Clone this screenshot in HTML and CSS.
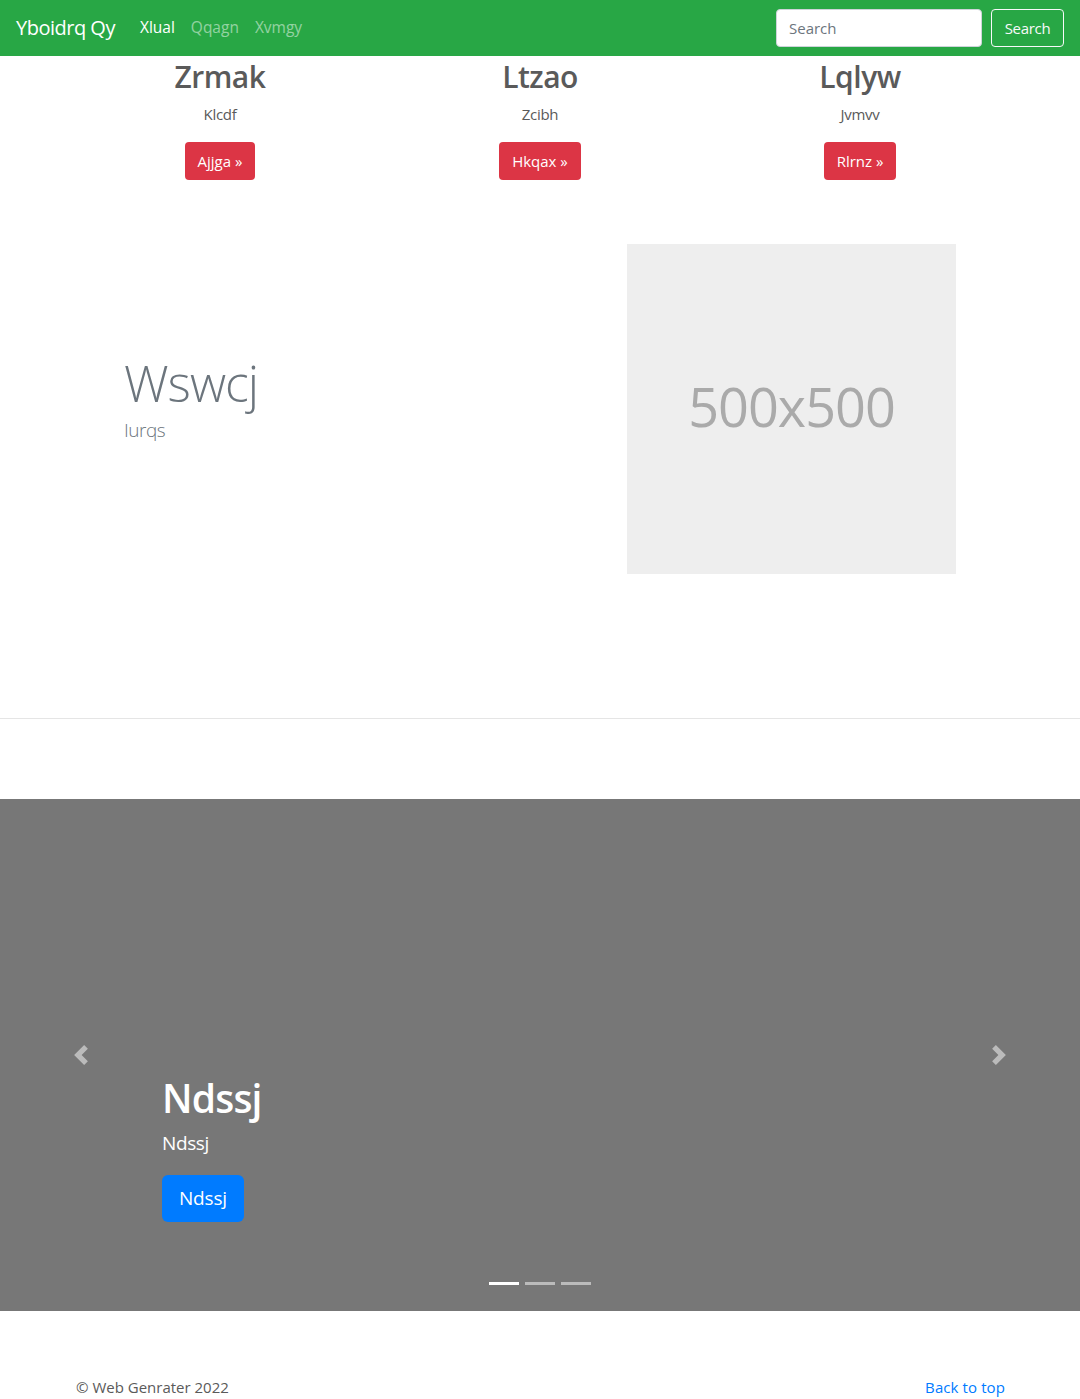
FILE: index.html
```html
<!DOCTYPE html>
<html lang="en">
<head>
<meta charset="utf-8">
<title>Yboidrq Qy</title>
<link rel="stylesheet" href="styles.css">
</head>
<body>
<header class="navbar">
  <a class="brand" href="#">Yboidrq Qy</a>
  <nav class="nav">
    <a class="nav-link active" href="#">Xlual</a>
    <a class="nav-link" href="#">Qqagn</a>
    <a class="nav-link" href="#">Xvmgy</a>
  </nav>
  <form class="search">
    <input class="search-input" type="text" placeholder="Search">
    <button class="search-btn" type="button">Search</button>
  </form>
</header>

<main>
  <section class="container marketing">
    <div class="col">
      <h2 class="col-title">Zrmak</h2>
      <p class="col-text">Klcdf</p>
      <a class="btn-danger" href="#">Ajjga &raquo;</a>
    </div>
    <div class="col">
      <h2 class="col-title">Ltzao</h2>
      <p class="col-text">Zcibh</p>
      <a class="btn-danger" href="#">Hkqax &raquo;</a>
    </div>
    <div class="col">
      <h2 class="col-title">Lqlyw</h2>
      <p class="col-text">Jvmvv</p>
      <a class="btn-danger" href="#">Rlrnz &raquo;</a>
    </div>
  </section>

  <section class="container featurette">
    <div class="feat-text">
      <h1 class="feat-heading">Wswcj</h1>
      <p class="feat-lead">Iurqs</p>
    </div>
    <div class="placeholder">500x500</div>
  </section>

  <hr class="divider">

  <section class="carousel">
    <ol class="indicators">
      <li class="ind active"></li>
      <li class="ind"></li>
      <li class="ind"></li>
    </ol>
    <a class="control prev" href="#">
      <svg width="20" height="20" viewBox="0 0 8 8"><path fill="#fff" d="M5.25 0l-4 4 4 4 1.5-1.5L4.25 4l2.5-2.5L5.25 0z"/></svg>
    </a>
    <a class="control next" href="#">
      <svg width="20" height="20" viewBox="0 0 8 8"><path fill="#fff" d="M2.75 0l-1.5 1.5L3.75 4l-2.5 2.5L2.75 8l4-4-4-4z"/></svg>
    </a>
    <div class="caption">
      <h1 class="cap-title">Ndssj</h1>
      <p class="cap-text">Ndssj</p>
      <p class="cap-action"><a class="btn-primary" href="#">Ndssj</a></p>
    </div>
  </section>
</main>

<footer class="container footer">
  <p class="copy">&copy; Web Genrater 2022</p>
  <a class="top-link" href="#">Back to top</a>
</footer>
</body>
</html>
```

FILE: styles.css
```css
* { box-sizing: border-box; }

html, body { margin: 0; padding: 0; }

body {
  font-family: "Open Sans", "Noto Sans", sans-serif;
  font-size: 16px;
  line-height: 1.5;
  color: #5a5a5a;
  background: #fff;
}

a { text-decoration: none; }

/* navbar */
.navbar {
  height: 56px;
  background: #28a745;
  display: flex;
  align-items: center;
  padding: 8px 16px;
}
.brand {
  font-size: 20px;
  line-height: 30px;
  color: #fff;
  margin-right: 16px;
  letter-spacing: -0.5px;
}
.nav { display: flex; flex: 1; padding-left: 1px; }
.nav-link {
  padding: 8px;
  color: rgba(255,255,255,.5);
  font-size: 15.5px;
  letter-spacing: 0;
}
.nav-link.active { color: #fff; }
.search { display: flex; align-items: center; }
.search-input {
  width: 206px;
  height: 38px;
  padding: 6px 12px;
  font: inherit;
  font-size: 15px;
  border: 1px solid #ced4da;
  border-radius: 4px;
  margin-right: 9px;
  color: #495057;
}
.search-input::placeholder { color: #6c757d; }
.search-btn {
  height: 38px;
  width: 73px;
  font: inherit;
  font-size: 15px;
  letter-spacing: -0.3px;
  color: #f8f9fa;
  background: transparent;
  border: 1px solid #f8f9fa;
  border-radius: 4px;
  padding: 0;
}

/* marketing */
.container {
  width: 960px;
  margin: 0 auto;
}
.marketing {
  display: grid;
  grid-template-columns: repeat(3, 1fr);
  text-align: center;
}
.col-title {
  font-size: 30px;
  font-weight: 600;
  line-height: 38px;
  margin: 2px 0 6px;
  letter-spacing: -0.5px;
}
.col-text {
  margin: 0 0 16px;
  font-size: 15px;
  line-height: 24px;
  letter-spacing: -0.3px;
}
.btn-danger {
  display: inline-block;
  background: #dc3545;
  color: #fff;
  border-radius: 4px;
  padding: 0 13px;
  height: 38px;
  line-height: 38px;
  font-size: 15px;
  letter-spacing: 0;
}

/* featurette */
.featurette {
  display: grid;
  grid-template-columns: 552px 329px;
  align-items: center;
  margin-top: 64px;
  padding-left: 15px;
}
.feat-text { padding-left: 49px; padding-bottom: 20px; }
.feat-heading {
  font-size: 50px;
  font-weight: 300;
  line-height: 56px;
  margin: 0 0 6px;
  color: #6c757d;
  letter-spacing: -1px;
}
.feat-lead {
  font-size: 19px;
  font-weight: 300;
  line-height: 26px;
  margin: 0;
  color: #6c757d;
  letter-spacing: -0.5px;
}
.placeholder {
  width: 329px;
  height: 330px;
  background: #eee;
  color: #aaa;
  font-size: 54px;
  display: flex;
  align-items: center;
  justify-content: center;
  letter-spacing: -1px;
  padding-bottom: 6px;
}

.divider {
  margin: 144px 0 80px;
  border: 0;
  border-top: 1px solid rgba(0,0,0,.1);
  height: 0;
}

/* carousel */
.carousel {
  position: relative;
  height: 512px;
  background: #777;
  margin-bottom: 64px;
}
.indicators {
  position: absolute;
  left: 0;
  right: 0;
  bottom: 16px;
  margin: 0;
  padding: 0;
  list-style: none;
  display: flex;
  justify-content: center;
}
.ind {
  width: 30px;
  height: 3px;
  margin: 10px 3px;
  background: #fff;
  opacity: .5;
}
.ind.active { opacity: 1; }
.control {
  position: absolute;
  top: 0;
  bottom: 0;
  width: 162px;
  display: flex;
  align-items: center;
  justify-content: center;
  opacity: .5;
}
.prev { left: 0; }
.next { right: 0; }
.caption {
  position: absolute;
  left: 162px;
  right: 162px;
  bottom: 69px;
  padding: 20px 0;
  color: #fff;
}
.cap-title {
  font-size: 39px;
  font-weight: 600;
  line-height: 48px;
  margin: 0 0 7px;
  letter-spacing: -0.8px;
}
.cap-text {
  font-size: 19px;
  line-height: 28px;
  margin: 0 0 18px;
  letter-spacing: -0.4px;
}
.cap-action { margin: 0; line-height: 0; }
.btn-primary {
  display: inline-block;
  background: #007bff;
  color: #fff;
  font-size: 19px;
  line-height: 47px;
  height: 47px;
  padding: 0 17px;
  border-radius: 6px;
  letter-spacing: -0.2px;
}

/* footer */
.footer {
  display: flex;
  justify-content: space-between;
  align-items: flex-start;
  padding: 0 15px;
}
.copy {
  margin: 0;
  font-size: 15px;
  line-height: 24px;
  letter-spacing: 0;
  padding-left: 1px;
}
.top-link {
  color: #007bff;
  font-size: 15px;
  line-height: 24px;
  letter-spacing: 0.1px;
}
```
